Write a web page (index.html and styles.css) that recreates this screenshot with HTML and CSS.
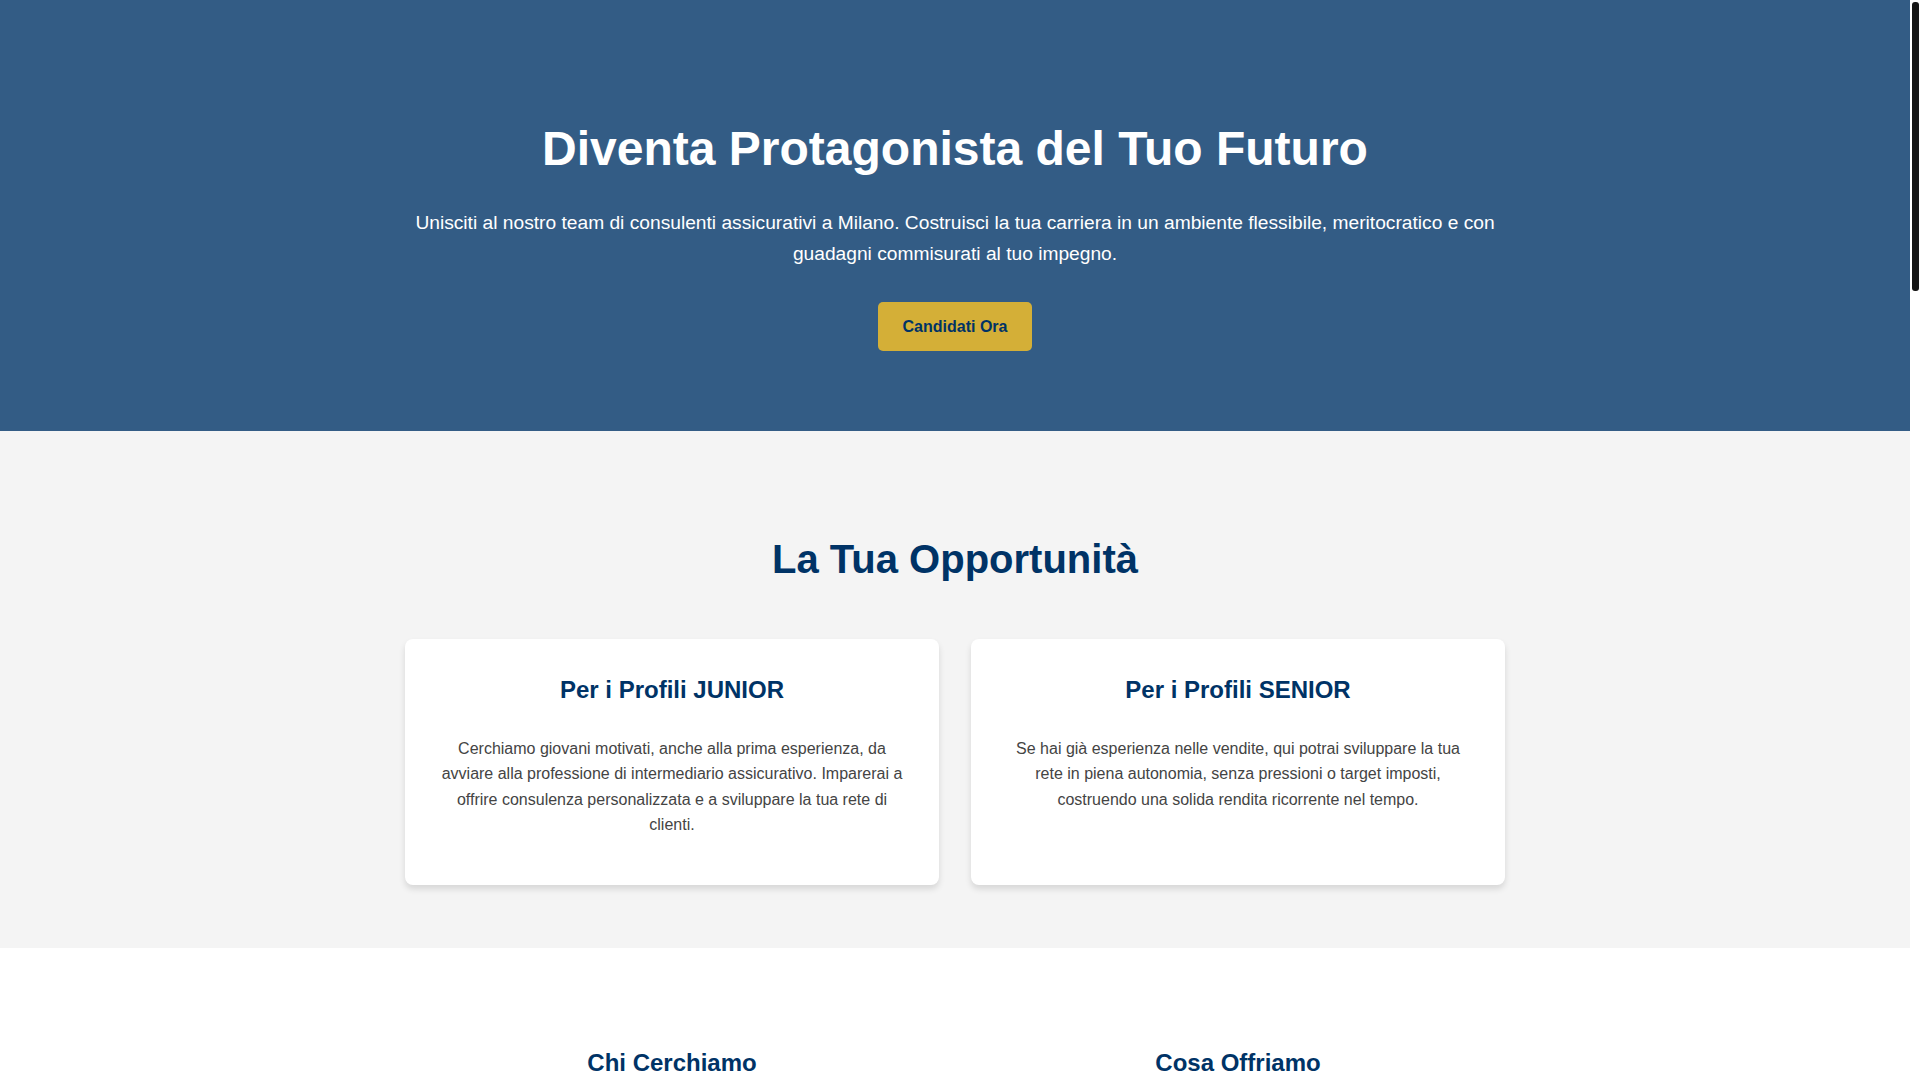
FILE: index.html
```html
<!DOCTYPE html>
<html lang="it">
<head>
<meta charset="utf-8">
<title>Lavora con noi - Consulenti Assicurativi Milano</title>
<link rel="stylesheet" href="styles.css">
</head>
<body>
<div class="fake-scrollbar" aria-hidden="true"><div class="fake-thumb"></div></div>
<header class="hero">
  <div class="container hero-inner">
    <h1 class="hero-title">Diventa Protagonista del Tuo Futuro</h1>
    <p class="hero-text">Unisciti al nostro team di consulenti assicurativi a Milano. Costruisci la tua carriera in un ambiente flessibile, meritocratico e con guadagni commisurati al tuo impegno.</p>
    <div class="hero-cta"><a class="btn" href="#candidati">Candidati Ora</a></div>
  </div>
</header>

<section class="section section-grey">
  <div class="container">
    <h2 class="section-title">La Tua Opportunità</h2>
    <div class="grid-2">
      <div class="card">
        <h3 class="card-title">Per i Profili JUNIOR</h3>
        <p class="card-text">Cerchiamo giovani motivati, anche alla prima esperienza, da avviare alla professione di intermediario assicurativo. Imparerai a offrire consulenza personalizzata e a sviluppare la tua rete di clienti.</p>
      </div>
      <div class="card">
        <h3 class="card-title">Per i Profili SENIOR</h3>
        <p class="card-text">Se hai già esperienza nelle vendite, qui potrai sviluppare la tua rete in piena autonomia, senza pressioni o target imposti, costruendo una solida rendita ricorrente nel tempo.</p>
      </div>
    </div>
  </div>
</section>

<section class="section section-white">
  <div class="container grid-2">
    <div class="col">
      <h3 class="col-title">Chi Cerchiamo</h3>
      <ul class="col-list">
        <li>Persone dinamiche e orientate al risultato</li>
        <li>Ottime capacità relazionali e comunicative</li>
        <li>Diploma di scuola superiore o laurea</li>
        <li>Residenza a Milano o provincia</li>
      </ul>
    </div>
    <div class="col">
      <h3 class="col-title">Cosa Offriamo</h3>
      <ul class="col-list">
        <li>Formazione continua e affiancamento</li>
        <li>Provvigioni interessanti e incentivi</li>
        <li>Orari flessibili e autonomia</li>
        <li>Reali opportunità di crescita</li>
      </ul>
    </div>
  </div>
</section>

<section class="section section-grey" id="candidati">
  <div class="container narrow">
    <h2 class="section-title">Candidati Ora</h2>
    <form class="form">
      <label class="field"><span>Nome e Cognome</span><input type="text"></label>
      <label class="field"><span>Email</span><input type="email"></label>
      <label class="field"><span>Telefono</span><input type="tel"></label>
      <label class="field"><span>Profilo</span><select><option>Junior</option><option>Senior</option></select></label>
      <label class="field"><span>Messaggio</span><textarea rows="6"></textarea></label>
      <button class="btn" type="button">Invia Candidatura</button>
    </form>
  </div>
</section>

<footer class="footer">
  <p>&copy; 2024 Agenzia Assicurativa Milano. Tutti i diritti riservati.</p>
</footer>
</body>
</html>
```

FILE: styles.css
```css
* { box-sizing: border-box; }
html, body { margin: 0; padding: 0; }
body {
  font-family: "Liberation Sans", Arial, sans-serif;
  line-height: 1.6;
  color: #444;
  background: #fff;
  margin-right: 10px;
}
.fake-scrollbar {
  position: fixed;
  top: 0;
  right: 0;
  width: 10px;
  height: 100vh;
  background: #fff;
  z-index: 10;
}
.fake-thumb {
  position: absolute;
  top: 2px;
  left: 2px;
  width: 7px;
  height: 289px;
  background: #151515;
  border-radius: 3px;
}
.container {
  max-width: 1100px;
  margin: 0 auto;
}
.hero {
  background: #335c85;
  color: #fff;
  text-align: center;
  padding: 80px 0;
}
.hero-title {
  font-size: 48px;
  font-weight: 700;
  margin: 31px 0 20px;
}
.hero-text {
  font-size: 19.2px;
  margin: 0 0 33px;
}
.hero-cta {
  display: flex;
  justify-content: center;
}
.btn {
  display: inline-block;
  background: #d4af37;
  color: #003366;
  font-family: inherit;
  font-size: 16px;
  font-weight: 700;
  line-height: 19px;
  padding: 15px 25px;
  border: none;
  border-radius: 5px;
  text-decoration: none;
}
.section { padding: 96px 0 63px; }
.section-grey { background: #f4f4f4; }
.section-white { background: #fff; }
.section-title {
  color: #003366;
  font-size: 40px;
  text-align: center;
  margin: 0 0 48px;
}
.grid-2 {
  display: grid;
  grid-template-columns: 1fr 1fr;
  gap: 32px;
}
.card {
  background: #fff;
  border-radius: 8px;
  padding: 32px 32px 47px;
  text-align: center;
  box-shadow: 0 4px 6px rgba(0, 0, 0, 0.12);
}
.card-title, .col-title {
  color: #003366;
  font-size: 24px;
  margin: 0 0 26px;
}
.card-text { margin: 0; font-size: 16px; }
.col { text-align: center; }
.col-list {
  list-style: none;
  padding: 0;
  margin: 0;
  font-size: 16px;
}
.col-list li { padding: 12px 0; border-bottom: 1px solid #eee; }
.section-white { padding-bottom: 400px; }
.narrow { max-width: 700px; }
.form { display: flex; flex-direction: column; gap: 20px; padding-bottom: 500px; }
.field { display: flex; flex-direction: column; gap: 6px; font-weight: 700; color: #003366; }
.field input, .field select, .field textarea {
  font-family: inherit;
  font-size: 16px;
  padding: 12px;
  border: 1px solid #ccc;
  border-radius: 5px;
}
.form .btn { align-self: center; cursor: pointer; }
.footer {
  background: #003366;
  color: #fff;
  text-align: center;
  padding: 40px 0 600px;
}
.footer p { margin: 0; }
```
